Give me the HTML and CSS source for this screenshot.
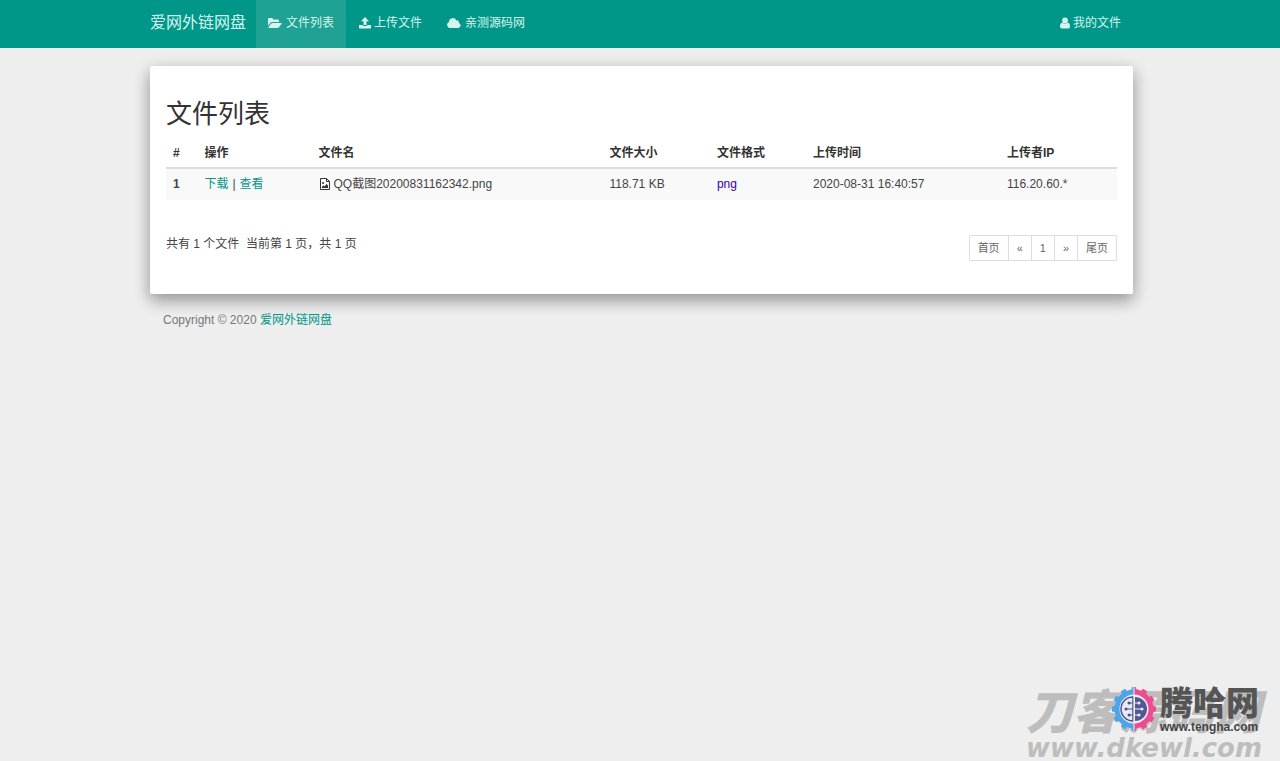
FILE: index.html
```html
<!DOCTYPE html>
<html lang="zh-CN">
<head>
<meta charset="utf-8">
<meta name="viewport" content="width=device-width, initial-scale=1">
<title>爱网外链网盘</title>
<link rel="stylesheet" href="styles.css">
</head>
<body>
<header class="navbar">
  <nav class="container nav-inner">
    <a class="brand" href="#">爱网外链网盘</a>
    <a class="nav-link active" href="#"><svg class="icon icon-wide" viewBox="0 0 14 12" aria-hidden="true"><path d="M0 9V2.2Q0 1 1.2 1h2.6Q5 1 5 2.2V2.5h4.8Q11 2.500 11 3.700V5H4.200Q3 5 2.200 6z"/><path d="M4.200 6H13.300Q14.200 6 13.600 6.800L11.200 10Q10.500 11 9.400 11H1Q0 11 .7 10L3 6.700Q3.500 6 4.200 6z"/></svg>文件列表</a>
    <a class="nav-link" href="#"><svg class="icon" viewBox="0 0 12 12" aria-hidden="true"><path d="M6 0l4 4.200H7.500V8h-3V4.200H2z"/><path d="M0 8h3.500q.4 1 1.500 1h2q1.100 0 1.500-1H12v3.500H0z"/></svg>上传文件</a>
    <a class="nav-link" href="#"><svg class="icon icon-wide" viewBox="0 0 14 12" aria-hidden="true"><path d="M3.200 11A3.200 3.200 0 0 1 2 4.900 3.800 3.800 0 0 1 9.300 3.400 2.200 2.200 0 0 1 12 6a2.600 2.600 0 0 1-.8 5z"/></svg>亲测源码网</a>
    <a class="nav-link nav-right" href="#"><svg class="icon icon-user" viewBox="0 0 10 12" aria-hidden="true"><circle cx="5" cy="3.500" r="2.900"/><path d="M2.300 5.600Q5 8 7.700 5.600 10 6.200 10 9.500 10 11.500 8.300 11.500H1.700Q0 11.500 0 9.500 0 6.200 2.300 5.600z"/></svg>我的文件</a>
  </nav>
</header>
<main class="container">
  <section class="card">
    <h1 class="title">文件列表</h1>
    <table class="files">
      <thead>
        <tr><th class="col-id">#</th><th class="col-action">操作</th><th class="col-name">文件名</th><th class="col-size">文件大小</th><th class="col-type">文件格式</th><th class="col-time">上传时间</th><th>上传者IP</th></tr>
      </thead>
      <tbody>
        <tr>
          <td><b>1</b></td>
          <td><a href="#">下载</a><span class="divider">|</span><a href="#">查看</a></td>
          <td><svg class="file-icon" viewBox="0 0 12 12" aria-hidden="true"><path d="M1.500.5h6l3 3v8h-9zM7.500.5v3h3" fill="none" stroke="currentColor"/><circle cx="4" cy="5" r="1"/><path d="M3 10V8.500l1.500-1 1 1L7.500 6 9 7.500V10z"/></svg>QQ截图20200831162342.png</td>
          <td>118.71 KB</td>
          <td class="type">png</td>
          <td>2020-08-31 16:40:57</td>
          <td>116.20.60.*</td>
        </tr>
      </tbody>
    </table>
    <div class="table-foot">
      <p class="summary">共有 1 个文件&nbsp; 当前第 1 页，共 1 页</p>
      <nav class="pager" aria-label="分页"><a href="#">首页</a><a href="#">«</a><a href="#">1</a><a href="#">»</a><a href="#">尾页</a></nav>
    </div>
  </section>
  <footer class="copyright">Copyright © 2020 <a href="#">爱网外链网盘</a></footer>
</main>
<div class="watermark">
  <div class="mark-name">刀客源码网</div>
  <div class="mark-url">www.dkewl.com</div>
  <div class="sponsor">
    <svg class="gear" viewBox="0 0 44 44" aria-hidden="true">
      <g stroke-width="6" fill="none">
        <path d="M22 5.500a16.500 16.500 0 0 0 0 33" stroke="#4fa4e8"/>
        <path d="M22 5.500a16.500 16.500 0 0 1 0 33" stroke="#ee4b91"/>
      </g>
      <g fill="#4fa4e8"><path d="M22 0h-2l-1 5h3zM22 44h-2l-1-5h3z"/><path id="tooth" d="M0 19.500l5-.8v6.600l-5-.8z"/><use href="#tooth" transform="rotate(30 22 22)"/><use href="#tooth" transform="rotate(60 22 22)"/><use href="#tooth" transform="rotate(-30 22 22)"/><use href="#tooth" transform="rotate(-60 22 22)"/></g>
      <g fill="#ee4b91"><path d="M22 0h2l1 5h-3zM22 44h2l1-5h-3z"/><path id="tooth-r" d="M44 19.500l-5-.8v6.600l5-.8z"/><use href="#tooth-r" transform="rotate(30 22 22)"/><use href="#tooth-r" transform="rotate(60 22 22)"/><use href="#tooth-r" transform="rotate(-30 22 22)"/><use href="#tooth-r" transform="rotate(-60 22 22)"/></g>
      <circle cx="22" cy="22" r="14.500" fill="#f1eff5"/>
      <path d="M21 10a12 12 0 0 0 0 24z" fill="#e6eaf4" stroke="#49528f" stroke-width="1.500"/>
      <path d="M23 10a12 12 0 0 1 0 24z" fill="#525796"/>
      <path d="M21 16h-4M21 22h-7M21 28h-4" stroke="#49528f" stroke-width="1.200"/>
      <path d="M23 16h4M23 22h7M23 28h4" stroke="#eee" stroke-width="1.200"/>
      <g fill="#49528f"><circle cx="17" cy="16" r="1.500"/><circle cx="14" cy="22" r="1.500"/><circle cx="17" cy="28" r="1.500"/></g>
      <g fill="#eee"><circle cx="27" cy="16" r="1.500"/><circle cx="30" cy="22" r="1.500"/><circle cx="27" cy="28" r="1.500"/></g>
      <path d="M22 0v44" stroke="#eee"/>
    </svg>
    <div class="sponsor-text"><div class="sponsor-name">腾哈网</div><div class="sponsor-url">www.tengha.com</div></div>
  </div>
</div>
</body>
</html>
```
FILE: styles.css
```css
* { box-sizing: border-box; }
body {
  margin: 0;
  min-height: 100vh;
  background: #eee;
  color: #444;
  font: 12px/18px "Liberation Sans", "Noto Sans CJK SC", sans-serif;
}
a { color: #009688; text-decoration: none; }
.container { width: 100%; max-width: 983px; margin: 0 auto; }
.navbar { padding-left: 3px; background: #009688; }
main.container { max-width: 986px; padding-left: 3px; }
.nav-inner { display: flex; height: 48px; }
.brand, .nav-link { display: flex; align-items: center; color: #d5f5ef; padding: 0 12px 2px; white-space: nowrap; }
.brand { padding-left: 0; padding-right: 10px; font-size: 16px; }
.nav-link.active { background: #1fa193; }
.nav-right { margin-left: auto; }
.icon { width: 12px; height: 12px; margin-right: 3px; fill: currentColor; }
.icon-wide { width: 14px; margin-right: 4px; }
.icon-user { width: 10px; }
.nav-link + .nav-link { padding-left: 13px; }
.card {
  margin-top: 18px;
  padding: 31px 16px 33px;
  background: #fff;
  border-radius: 2px;
  box-shadow: 0 7px 15px rgba(0, 0, 0, .22), 0 5px 18px rgba(0, 0, 0, .2);
}
.title { margin: 0 0 6px; font-size: 26px; line-height: 34px; font-weight: 400; color: #333; }
.files { width: 100%; table-layout: fixed; border-collapse: collapse; text-align: left; }
.files th, .files td { padding: 6px 7px; white-space: nowrap; }
.files th { padding-bottom: 5px; padding-top: 7px; color: #333; border-bottom: 2px solid #ddd; }
.files td { padding-bottom: 7px; background: #f9f9f9; }
.col-id { width: 3.3%; }
.col-action { width: 12%; }
.col-name { width: 30.6%; }
.col-size { width: 11.3%; }
.col-type { width: 10.1%; }
.col-time { width: 20.4%; }
.type { color: #30b; }
.divider { margin: 0 4px; }
.file-icon { width: 12px; height: 12px; margin: 0 2px 0 1px; vertical-align: -2px; fill: currentColor; color: #333; }
.table-foot { display: flex; justify-content: space-between; align-items: flex-start; margin-top: 35px; }
.summary { margin: 0; }
.pager { display: flex; border: 1px solid #ddd; border-radius: 2px; font-size: 11px; line-height: 24px; }
.pager a { padding: 0 8px; color: #666; }
.pager a + a { border-left: 1px solid #ddd; }
.copyright { margin: 17px 13px; color: #777; }
.watermark {
  position: absolute;
  right: 12px;
  bottom: 0;
  width: 242px;
  color: #bdbdbd;
  font-weight: 900;
  font-style: italic;
  white-space: nowrap;
}
.mark-name { font-size: 47px; line-height: 44px; }
.mark-url { font: italic bold 26px/26px "DejaVu Sans", sans-serif; }
.sponsor { position: absolute; left: 86px; top: -4px; display: flex; gap: 4px; font-style: normal; }
.gear { width: 44px; height: 44px; }
.sponsor-name { font-size: 33px; line-height: 34px; color: #555; }
.sponsor-url { font-size: 12px; line-height: 12px; font-weight: 700; color: #444; }
```
